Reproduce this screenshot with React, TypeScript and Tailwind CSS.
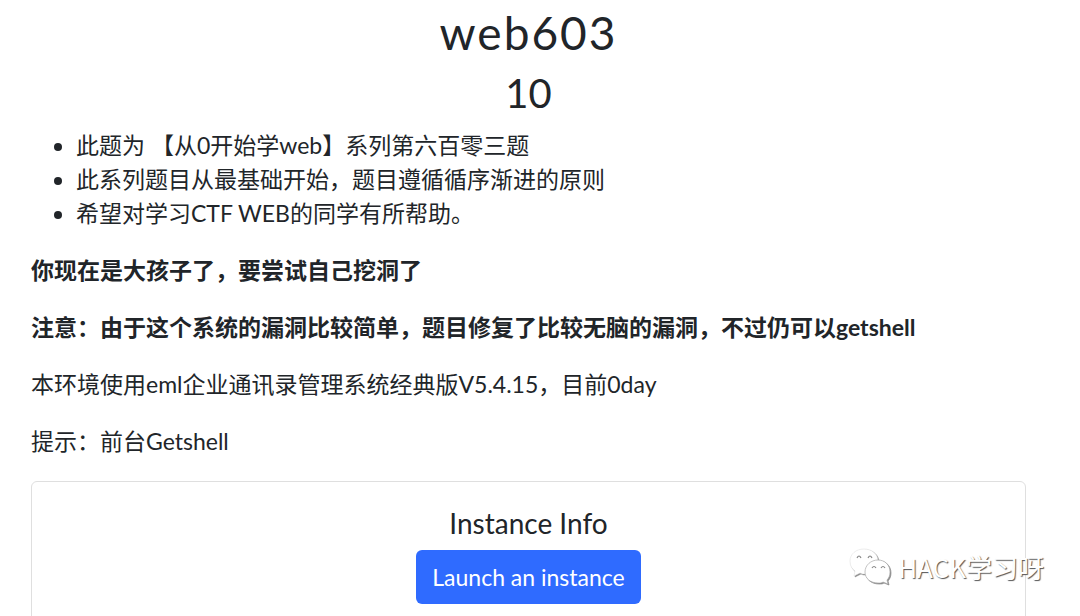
import type { ReactNode } from "react";

const rules = [
  "此题为 【从0开始学web】系列第六百零三题",
  "此系列题目从最基础开始，题目遵循循序渐进的原则",
  "希望对学习CTF WEB的同学有所帮助。",
];

function Paragraph({ children }: { children: ReactNode }) {
  return <p className="mb-[23px]">{children}</p>;
}

function Watermark() {
  return (
    <div className="absolute right-9 bottom-[30px] flex items-center gap-[7px] font-['Noto_Sans_CJK_SC',sans-serif] text-white">
      <svg className="h-[38px] w-[42px] drop-shadow-[1px_1px_0px_#888]" viewBox="0 0 42 38" fill="#fff">
        <path d="M15 1C7 1 1 6 1 13c0 5 2 8 5 10l-1 5 6-3c2 1 3 1 5 1 8 0 13-6 13-13S23 1 15 1z" stroke="#ddd" strokeWidth="0.5" />
        <path d="M29 12c-7 0-13 5-13 12s6 11 13 11c2 0 4 0 5-1l5 2-1-4c2-2 3-5 3-8 0-7-5-12-12-12z" stroke="#aaa" strokeWidth="0.7" />
        <g fill="none" stroke="#888" strokeWidth="1.2">
          <path d="M8 10q2-4 4 0M19 10q2-4 4 0M23 20q2-3 4 0M32 20q2-3 4 0" />
        </g>
      </svg>
      <span className="text-[26px] leading-9 [text-shadow:1px_1px_1px_#555]">HACK学习呀</span>
    </div>
  );
}

export default function App() {
  return (
    <main className="relative min-h-screen overflow-hidden bg-white pr-[54px] pl-[31px] font-['Lato','Noto_Sans_CJK_SC',sans-serif] text-[23px] leading-[34px] text-[#212529] max-h-screen">
      <h1 className="pt-1 text-center text-[46px] leading-[58px] tracking-[2px]">web603</h1>
      <h2 className="mb-[3px] text-center text-[40px] leading-[63px]">10</h2>

      <ul className="mb-[23px] list-disc pl-[45px]">
        {rules.map((rule) => (
          <li key={rule}>{rule}</li>
        ))}
      </ul>

      <Paragraph>
        <strong>你现在是大孩子了，要尝试自己挖洞了</strong>
      </Paragraph>
      <Paragraph>
        <strong>注意：由于这个系统的漏洞比较简单，题目修复了比较无脑的漏洞，不过仍可以getshell</strong>
      </Paragraph>
      <Paragraph>本环境使用eml企业通讯录管理系统经典版V5.4.15，目前0day</Paragraph>
      <Paragraph>提示：前台Getshell</Paragraph>

      <section className="flex flex-col items-center rounded-md border border-[#dfdfdf] px-7 pt-6 pb-12">
        <h3 className="mb-[10px] text-[28px] leading-[34px]">Instance Info</h3>
        <button type="button" className="rounded-md bg-[#2f6bff] px-4 py-[10px] text-white">
          Launch an instance
        </button>
      </section>

      <Watermark />
    </main>
  );
}
